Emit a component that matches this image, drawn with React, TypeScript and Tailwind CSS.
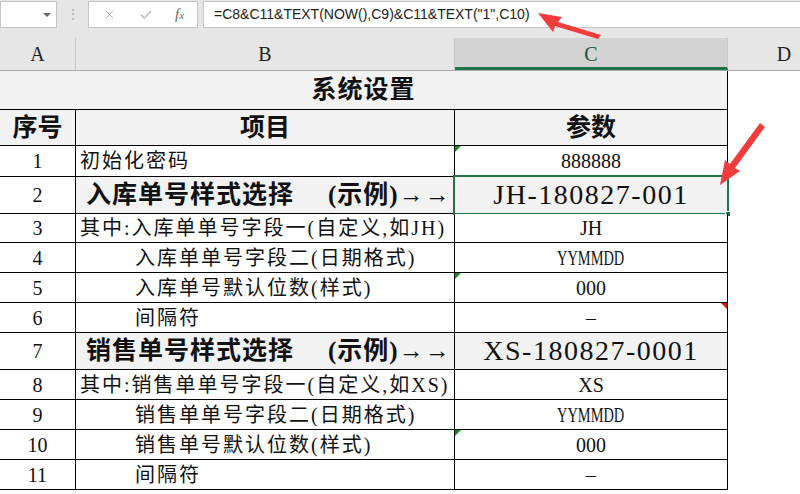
import React from 'react';
import { X, Check } from 'lucide-react';

type Row = {
  n: string;
  label: string;
  value: string;
  big?: boolean;
  indent?: boolean;
  selected?: boolean;
  mark?: 'green' | 'red';
  squeeze?: boolean;
};

const ROWS: Row[] = [
  { n: '1', label: '初始化密码', value: '888888', mark: 'green' },
  { n: '2', label: '入库单号样式选择', value: 'JH-180827-001', big: true, selected: true },
  { n: '3', label: '其中:入库单单号字段一(自定义,如JH)', value: 'JH' },
  { n: '4', label: '入库单单号字段二(日期格式)', value: 'YYMMDD', indent: true, squeeze: true },
  { n: '5', label: '入库单号默认位数(样式)', value: '000', indent: true, mark: 'green' },
  { n: '6', label: '间隔符', value: '–', indent: true, mark: 'red' },
  { n: '7', label: '销售单号样式选择', value: 'XS-180827-0001', big: true },
  { n: '8', label: '其中:销售单单号字段一(自定义,如XS)', value: 'XS' },
  { n: '9', label: '销售单单号字段二(日期格式)', value: 'YYMMDD', indent: true, squeeze: true },
  { n: '10', label: '销售单号默认位数(样式)', value: '000', indent: true, mark: 'green' },
  { n: '11', label: '间隔符', value: '–', indent: true },
];

const HEIGHTS: Record<string, string> = {
  '1': 'h-[31px]',
  '2': 'h-[37px]',
  '3': 'h-[29px]',
  '4': 'h-[30px]',
  '5': 'h-[30px]',
  '6': 'h-[30px]',
  '7': 'h-[37px]',
  '8': 'h-[30px]',
  '9': 'h-[30px]',
  '10': 'h-[30px]',
  '11': 'h-[30px]',
};

const serif = "font-['Liberation_Serif','Noto_Sans_CJK_SC',serif]";

const FormulaBar: React.FC = () => (
  <div className="flex h-[38px] items-start bg-[#e6e6e6] pt-[1px]">
    <div className="relative h-[27px] w-[57px] border border-[#c6c6c6] bg-white">
      <div className="absolute right-[5px] top-[11px] border-x-[4px] border-t-[4px] border-x-transparent border-t-[#666]" />
    </div>
    <div className="flex h-[27px] w-[31px] items-center justify-center text-[14px] leading-none text-[#b0b0b0]">⋮</div>
    <div className="flex h-[27px] w-[110px] items-center border border-[#c6c6c6] bg-white">
      <X className="ml-[14px] h-[13px] w-[13px] text-[#a8a8a8]" strokeWidth={1.5} />
      <Check className="ml-[23px] h-[14px] w-[14px] text-[#b8b8b8]" strokeWidth={2.5} />
      <span className={`ml-[22px] text-[15px] italic text-[#666] ${serif}`}>
        f<span className="text-[11px]">x</span>
      </span>
    </div>
    <div className="ml-[5px] flex h-[27px] flex-1 items-center border border-r-0 border-[#c6c6c6] bg-white pl-[10px] font-['Liberation_Sans','Noto_Sans_CJK_SC',sans-serif] text-[14px] text-[#222]">
      =C8&amp;C11&amp;TEXT(NOW(),C9)&amp;C11&amp;TEXT("1",C10)
    </div>
  </div>
);

const ColumnHeaders: React.FC = () => (
  <div className={`flex h-[33px] border-b border-[#ababab] bg-[#e6e6e6] text-[20px] text-[#222] ${serif}`}>
    <div className="flex w-[76px] items-center justify-center border-r border-[#c8c8c8]">A</div>
    <div className="flex w-[379px] items-center justify-center border-r border-[#c8c8c8]">B</div>
    <div className="flex w-[273px] items-center justify-center border-r border-[#c8c8c8] border-b-[3px] border-b-[#217346] bg-[#d3d3d3] pt-[2px] text-[#1d4f30]">C</div>
    <div className="flex flex-1 items-center justify-center pl-[40px]">D</div>
  </div>
);

const Mark: React.FC<{ color: 'green' | 'red' }> = ({ color }) =>
  color === 'green' ? (
    <div className="absolute left-0 top-0 border-r-[6px] border-t-[6px] border-r-transparent border-t-[#1e8a1e]" />
  ) : (
    <div className="absolute right-0 top-0 border-l-[6px] border-t-[6px] border-l-transparent border-t-[#e01010]" />
  );

const DataRow: React.FC<{ row: Row }> = ({ row }) => {
  const shade = row.big ? 'bg-[#f2f2f2]' : 'bg-white';
  return (
    <div className={`flex ${HEIGHTS[row.n]} border-b border-black`}>
      <div className="flex w-[76px] items-center justify-center border-r border-black bg-white text-[20px]">{row.n}</div>
      <div className={`flex w-[379px] items-center border-r border-black ${shade} ${row.indent ? 'pl-[59px]' : row.big ? 'pl-[10px]' : 'pl-[4px]'}`}>
        {row.big ? (
          <span className="whitespace-pre text-[25px] font-bold tracking-[1px]">
            {row.label}
            <span className="ml-[34px]">(示例)→→</span>
          </span>
        ) : (
          <span className="whitespace-pre text-[20px] tracking-[2px]">{row.label}</span>
        )}
      </div>
      <div className={`relative flex w-[273px] items-center justify-center border-r border-black ${shade}`}>
        {row.mark && <Mark color={row.mark} />}
        {row.big ? (
          <span className="text-[28px] tracking-[1.5px]">{row.value}</span>
        ) : row.squeeze ? (
          <span className="inline-block scale-x-[0.72] text-[20px]">{row.value}</span>
        ) : (
          <span className="text-[20px]">{row.value}</span>
        )}
        {row.selected && (
          <div className="absolute inset-[-2px] border-2 border-[#217346]">
            <div className="absolute bottom-[-4px] right-[-4px] h-[6px] w-[6px] border border-white bg-[#217346]" />
          </div>
        )}
      </div>
    </div>
  );
};

const Arrows: React.FC = () => (
  <svg className="pointer-events-none absolute left-0 top-0" width="800" height="494">
    <g fill="#f23b3b">
      <polygon points="538,13 562,17 558,22 601,35 598,39 555,26 553,32" />
      <polygon points="720,185 725,160 730,164 760,123 765,127 735,168 740,171" />
    </g>
  </svg>
);

export default function App() {
  return (
    <div className={`relative h-[494px] w-[800px] overflow-hidden bg-white text-[#111] ${serif}`}>
      <FormulaBar />
      <ColumnHeaders />
      <div className="w-[728px]">
        <div className="flex h-[39px] items-center justify-center border-b border-r border-black bg-[#f2f2f2] text-[25px] font-bold tracking-[1px]">
          系统设置
        </div>
        <div className="flex h-[36px] border-b border-black bg-[#f2f2f2] text-[25px] font-bold">
          <div className="flex w-[76px] items-center justify-center border-r border-black">序号</div>
          <div className="flex w-[379px] items-center justify-center border-r border-black">项目</div>
          <div className="relative flex w-[273px] items-center justify-center border-r border-black">参数</div>
        </div>
        {ROWS.map((r) => (
          <DataRow key={r.n} row={r} />
        ))}
      </div>
      <Arrows />
    </div>
  );
}
